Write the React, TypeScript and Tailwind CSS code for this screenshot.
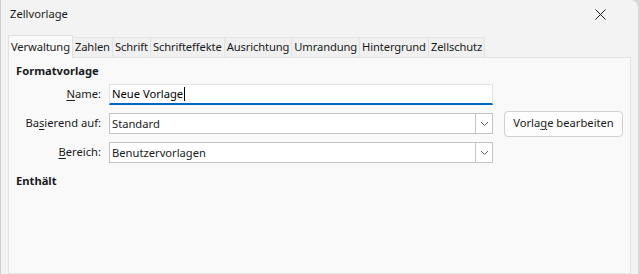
import React from "react";

const tabs = [
  "Verwaltung",
  "Zahlen",
  "Schrift",
  "Schrifteffekte",
  "Ausrichtung",
  "Umrandung",
  "Hintergrund",
  "Zellschutz",
];

function Chevron() {
  return (
    <svg width="9" height="6" viewBox="0 0 9 6" fill="none">
      <path d="M1 1l3.5 3.5L8 1" stroke="#606060" strokeWidth="1" />
    </svg>
  );
}

function Combo({ value }: { value: string }) {
  return (
    <div className="flex h-[21px] w-[384px] border border-[#c4c4c4] bg-white">
      <div className="flex flex-1 items-center pl-[2px] leading-none">{value}</div>
      <div className="flex w-[17px] items-center justify-center border-l border-[#c4c4c4]">
        <Chevron />
      </div>
    </div>
  );
}

export default function App() {
  return (
    <div
      className="flex h-[274px] w-[640px] overflow-hidden bg-[#d8d8d8] text-[11.2px] text-[#1a1a1a]"
      style={{ fontFamily: '"Noto Sans", "Open Sans", sans-serif' }}
    >
      <div className="flex w-[638px] flex-col rounded-tr-lg border-l border-[#d0d0d0] bg-[#f3f3f3]">
        {/* title bar */}
        <div className="flex h-[28px] items-center justify-between pl-[9px] pr-[32px]">
          <span>Zellvorlage</span>
          <svg width="11" height="11" viewBox="0 0 11 11">
            <path d="M0.5 0.5l10 10M10.5 0.5l-10 10" stroke="#1a1a1a" strokeWidth="1" />
          </svg>
        </div>

        <div className="flex flex-1 flex-col pl-[7px] pr-[7px] pt-[7px]">
          {/* tabs */}
          <div className="flex h-[22px] items-end tracking-[-0.12px]">
            {tabs.map((t, i) =>
              i === 0 ? (
                <div
                  key={t}
                  className="relative z-10 -mb-px flex h-[23px] items-center border border-b-0 border-[#e0e0e0] bg-[#f9f9f9] px-[2px]"
                >
                  {t}
                </div>
              ) : (
                <div
                  key={t}
                  className="flex h-[20px] items-center border border-l-0 border-b-0 border-[#e3e3e3] bg-[#f0f0f0] px-[2px]"
                >
                  {t}
                </div>
              )
            )}
          </div>

          {/* panel */}
          <div className="flex-1 border border-[#e3e3e3] bg-[#f9f9f9] pl-[7px] pt-[5px]">
            <div className="font-bold leading-[16px]">Formatvorlage</div>

            <div className="mt-[5px] grid grid-cols-[85px_384px_auto] items-center gap-x-[8px] gap-y-[8px]">
              <div className="text-right">
                <span className="underline underline-offset-2">N</span>ame:
              </div>
              <div className="flex h-[21px] items-center border border-b-2 border-[#e3e3e3] border-b-[#0067c0] bg-white pl-[2px] leading-none text-black">
                Neue Vorlage
                <span className="ml-px inline-block h-[14px] w-px bg-black" />
              </div>
              <div />

              <div className="text-right">
                Ba<span className="underline underline-offset-2">s</span>ierend auf:
              </div>
              <Combo value="Standard" />
              <button className="-my-[3px] ml-[3px] h-[26px] w-[119px] rounded-[4px] border border-[#d0d0d0] bg-[#fdfdfd]">
                Vorla<span className="underline underline-offset-2">g</span>e bearbeiten
              </button>

              <div className="text-right">
                <span className="underline underline-offset-2">B</span>ereich:
              </div>
              <Combo value="Benutzervorlagen" />
              <div />
            </div>

            <div className="mt-[10px] font-bold leading-[16px]">Enthält</div>
          </div>
        </div>
      </div>
    </div>
  );
}
